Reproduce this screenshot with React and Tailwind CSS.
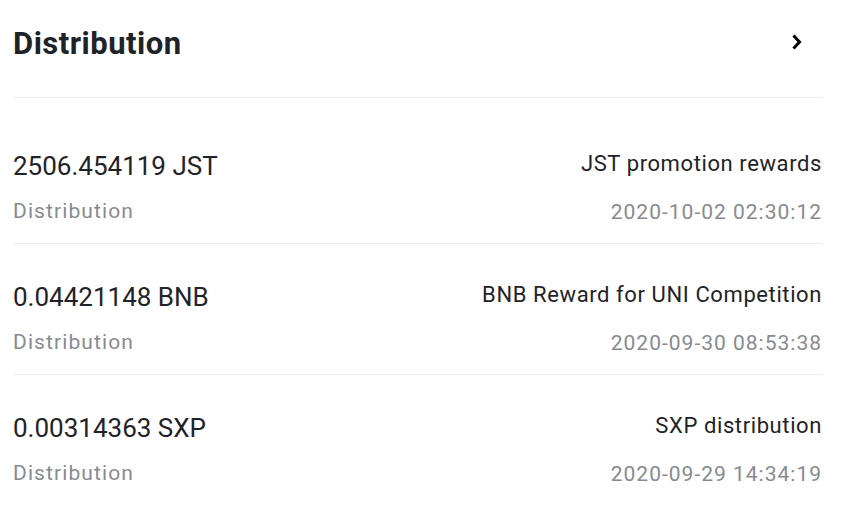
import React from "react";

const rows = [
  { amount: "2506.454119 JST", desc: "JST promotion rewards", date: "2020-10-02 02:30:12" },
  { amount: "0.04421148 BNB", desc: "BNB Reward for UNI Competition", date: "2020-09-30 08:53:38" },
  { amount: "0.00314363 SXP", desc: "SXP distribution", date: "2020-09-29 14:34:19" },
];

export default function App() {
  return (
    <div className="w-[842px] h-[523px] bg-white pl-[13px] pr-[20px] overflow-hidden" style={{ fontFamily: "Roboto, 'Noto Sans', sans-serif" }}>
      <div className="h-[98px] flex items-start justify-between border-b border-[#eaecef] pt-[24px]">
        <div className="text-[31px] leading-[40px] font-bold tracking-[0.5px] text-[#1e2329]">Distribution</div>
        <svg width="12" height="18" viewBox="0 0 12 18" className="mr-[19px] mt-[9px]">
          <path d="M2.5 2.5 L8.5 9 L2.5 15.5" fill="none" stroke="#000" strokeWidth="3" />
        </svg>
      </div>
      <div className="mt-[15px]">
        {rows.map((r, i) => (
          <div key={i} className={`flex justify-between pt-[37px] h-[131px] ${i < 2 ? "border-b border-[#eaecef]" : ""}`}>
            <div className="flex flex-col">
              <div className="text-[26px] leading-[32px] text-[#1e2329]">{r.amount}</div>
              <div className="text-[21px] leading-[28px] mt-[15px] tracking-[1.1px] text-[#868b92]">Distribution</div>
            </div>
            <div className="flex flex-col items-end">
              <div className="text-[22px] leading-[28px] tracking-[0.6px] text-[#1e2329]">{r.desc}</div>
              <div className="text-[21px] leading-[28px] mt-[20px] tracking-[1px] text-[#868b92]">{r.date}</div>
            </div>
          </div>
        ))}
      </div>
    </div>
  );
}
